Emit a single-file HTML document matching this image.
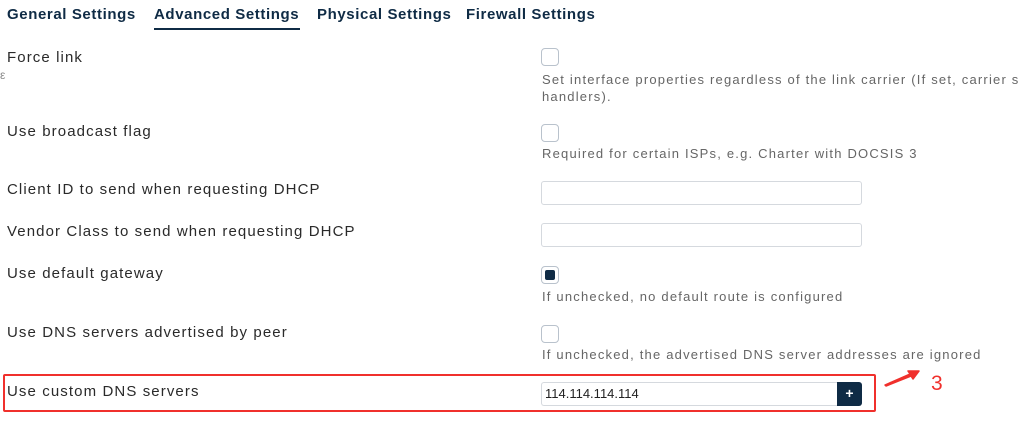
<!DOCTYPE html>
<html style="overflow:hidden"><head><meta charset="utf-8"><style>
body{margin:0;width:1019px;height:421px;background:#fff;position:relative;overflow:hidden;font-family:"Liberation Sans",sans-serif}
.a{position:absolute;white-space:nowrap}
.tab{top:6px;font-size:15px;font-weight:bold;color:#0f2b45;letter-spacing:0.6px}
.lbl{left:7px;font-size:15px;color:#2a2a2a;letter-spacing:1.1px}
.desc{left:542px;font-size:13px;color:#666;letter-spacing:1.2px}
.cb{left:541px;width:16px;height:16px;border:1px solid #b9c2cc;border-radius:4px;background:#fff}
.inp{left:541px;width:319px;height:22px;border:1px solid #d5d9de;border-radius:3px;background:#fff}
</style></head><body>
<div class="a tab" style="left:7px">General Settings</div>
<div class="a tab" style="left:154px">Advanced Settings</div>
<div class="a tab" style="left:317px">Physical Settings</div>
<div class="a tab" style="left:466px">Firewall Settings</div>
<div class="a" style="left:154px;top:28px;width:146px;height:2px;background:#0f2b45"></div>

<div class="a lbl" style="top:49px">Force link</div>
<div class="a" style="left:0;top:68px;font-size:12px;color:#888">ε</div>
<div class="a cb" style="top:48px"></div>
<div class="a" style="left:542px;top:72px;width:477px;overflow:hidden;font-size:13px;color:#666;letter-spacing:1.2px;white-space:nowrap">Set interface properties regardless of the link carrier (If set, carrier sense events do not invoke hotplug</div>
<div class="a desc" style="top:89px">handlers).</div>

<div class="a lbl" style="top:123px">Use broadcast flag</div>
<div class="a cb" style="top:124px"></div>
<div class="a desc" style="top:146px">Required for certain ISPs, e.g. Charter with DOCSIS 3</div>

<div class="a lbl" style="top:181px">Client ID to send when requesting DHCP</div>
<div class="a inp" style="top:181px"></div>
<div class="a lbl" style="top:223px">Vendor Class to send when requesting DHCP</div>
<div class="a inp" style="top:223px"></div>

<div class="a lbl" style="top:265px">Use default gateway</div>
<div class="a cb" style="top:266px"><div style="position:absolute;left:3px;top:3px;width:10px;height:10px;border-radius:2px;background:#0f2b45"></div></div>
<div class="a desc" style="top:289px">If unchecked, no default route is configured</div>

<div class="a lbl" style="top:324px">Use DNS servers advertised by peer</div>
<div class="a cb" style="top:325px"></div>
<div class="a desc" style="top:347px">If unchecked, the advertised DNS server addresses are ignored</div>

<div class="a" style="left:3px;top:374px;width:869px;height:34px;border:2px solid #f0302c;border-radius:2px"></div>
<div class="a lbl" style="top:383px">Use custom DNS servers</div>
<div class="a" style="left:541px;top:382px;width:293px;height:22px;border:1px solid #d5d9de;border-right:none;border-radius:3px 0 0 3px;font-size:13px;color:#222;line-height:22px;padding-left:3px">114.114.114.114</div>
<div class="a" style="left:837px;top:382px;width:25px;height:24px;background:#0f2b45;border-radius:0 3px 3px 0;color:#fff;font-size:14px;font-weight:bold;text-align:center;line-height:22px">+</div>
<svg class="a" style="left:880px;top:365px" width="45" height="25"><path d="M5 20 L30 9 L28 6 L39 6 L33 14 L31 11 L6 21 Z" fill="#f0302c" stroke="#f0302c" stroke-width="1.5" stroke-linejoin="round"/></svg>
<div class="a" style="left:931px;top:372px;font-size:21px;color:#f0302c">3</div>
</body></html>
